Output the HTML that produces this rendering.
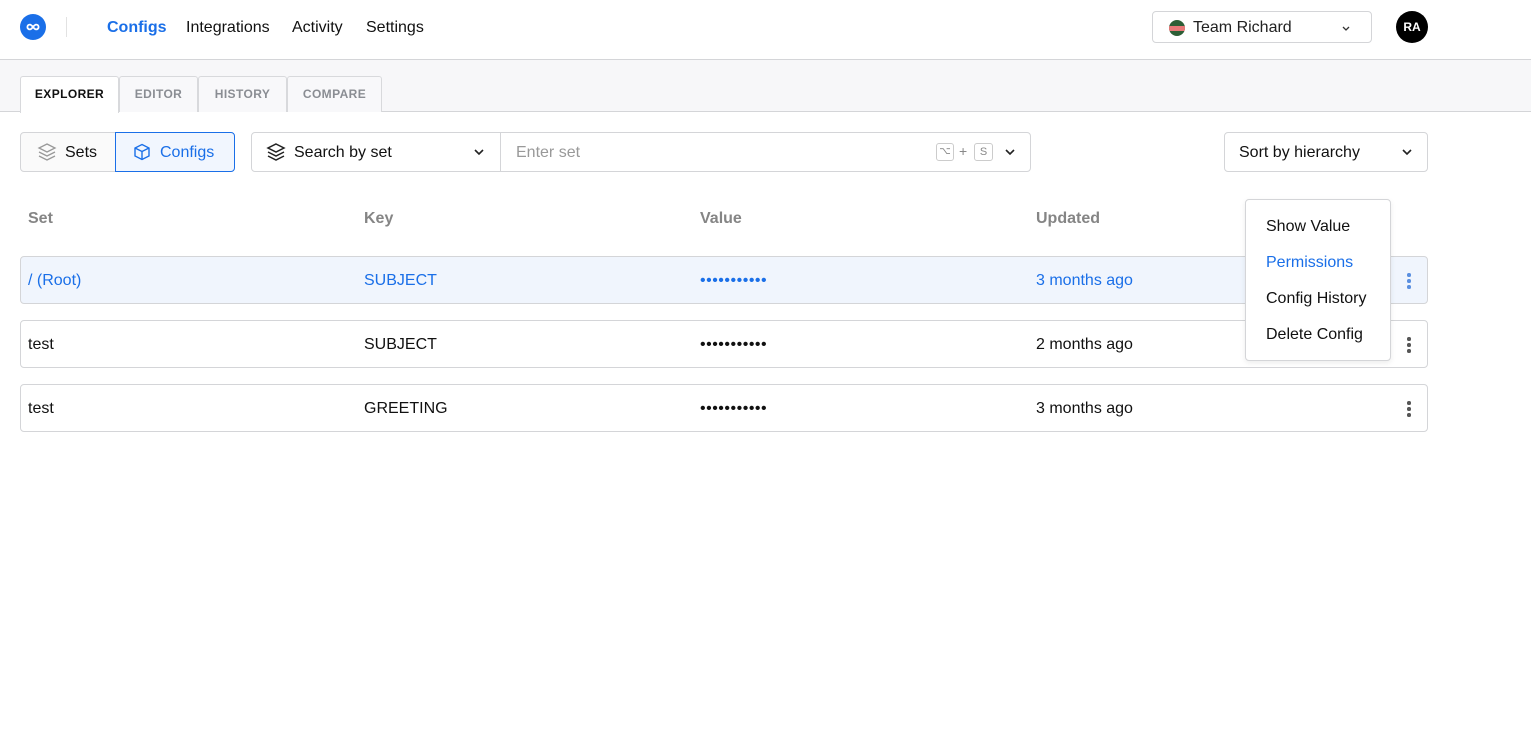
<!DOCTYPE html>
<html><head><style>
*{box-sizing:border-box;margin:0;padding:0}
body{width:1531px;height:755px;background:#fff;font-family:"Liberation Sans",sans-serif;color:#111;position:relative;overflow:hidden}
.a{position:absolute}
.blue{color:#1a6fe8}
.nav{font-size:16px;top:19px}
.tab{top:76px;height:36px;border:1px solid #d8d9dc;border-bottom:none;background:#f8f8fa;font-size:12px;font-weight:bold;letter-spacing:.4px;color:#8a8d93;text-align:center;line-height:35px;border-radius:3px 3px 0 0}
.box{border:1px solid #d4d5d8;border-radius:4px;background:#fff}
.row{left:20px;width:1408px;height:48px;border:1px solid #d4d5d8;border-radius:4px;font-size:16px}
.row span{position:absolute;top:15px}
.hd{top:210px;font-size:16px;font-weight:bold;color:#858585}
.dots{position:absolute;left:1386px;top:16px;width:4px}
.dots i{display:block;width:3.5px;height:3.5px;border-radius:50%;background:#555;margin-bottom:2.5px}
</style></head><body>
<div class="a" style="left:20px;top:14px;width:26px;height:26px;border-radius:50%;background:#1a6fe8"><svg width="26" height="26" viewBox="0 0 26 26"><path d="M13 13c-1.2-1.6-2-2.4-3.2-2.4a2.4 2.4 0 0 0 0 4.8c1.2 0 2-.8 3.2-2.4zm0 0c1.2 1.6 2 2.4 3.2 2.4a2.4 2.4 0 0 0 0-4.8c-1.2 0-2 .8-3.2 2.4" fill="none" stroke="#fff" stroke-width="1.8"/></svg></div>
<div class="a" style="left:66px;top:17px;width:1px;height:20px;background:#e2e2e2"></div>
<div class="a nav blue" style="left:107px;font-weight:bold">Configs</div>
<div class="a nav" style="left:186px">Integrations</div>
<div class="a nav" style="left:292px">Activity</div>
<div class="a nav" style="left:366px">Settings</div>
<div class="a box" style="left:1152px;top:11px;width:220px;height:32px;font-size:16px">
<div class="a" style="left:16px;top:8px;width:16px;height:16px;border-radius:50%;background:#2d5e36;overflow:hidden"><div class="a" style="left:0;top:6px;width:16px;height:5px;background:#e87878"></div></div>
<span class="a" style="left:40px;top:7px;color:#222">Team Richard</span>
<svg class="a" style="left:188px;top:11px" width="10" height="10" viewBox="0 0 10 10"><path d="M2 4l3 3 3-3" fill="none" stroke="#333" stroke-width="1.3"/></svg></div>
<div class="a" style="left:1396px;top:11px;width:32px;height:32px;border-radius:50%;background:#000;color:#fff;font-size:12px;font-weight:bold;text-align:center;line-height:32px">RA</div>
<div class="a" style="left:0;top:59px;width:1531px;height:53px;background:#f7f7f9;border-top:1px solid #d4d5d8;border-bottom:1px solid #d4d5d8"></div>
<div class="a tab" style="left:20px;width:99px;background:#fff;color:#111;height:37px">EXPLORER</div>
<div class="a tab" style="left:119px;width:79px">EDITOR</div>
<div class="a tab" style="left:198px;width:89px">HISTORY</div>
<div class="a tab" style="left:287px;width:95px">COMPARE</div>
<div class="a box" style="left:20px;top:132px;width:96px;height:40px;background:#fafafa;border-radius:4px 0 0 4px"></div>
<svg class="a" style="left:37px;top:142px" width="20" height="20" viewBox="0 0 20 20" fill="none" stroke="#999" stroke-width="1.3"><path d="M10 2l8 4-8 4-8-4z"/><path d="M2 10l8 4 8-4"/><path d="M2 14l8 4 8-4"/></svg>
<div class="a" style="left:65px;top:144px;font-size:16px">Sets</div>
<div class="a" style="left:115px;top:132px;width:120px;height:40px;border:1px solid #1a6fe8;background:#f1f6fe;border-radius:0 4px 4px 0"></div>
<svg class="a" style="left:133px;top:143px" width="18" height="18" viewBox="0 0 18 18" fill="none" stroke="#1a6fe8" stroke-width="1.4"><path d="M9 1.5l7 3.5v8l-7 3.5-7-3.5v-8z"/><path d="M2 5l7 3.5 7-3.5M9 8.5V16.5"/></svg>
<div class="a blue" style="left:160px;top:144px;font-size:16px">Configs</div>
<div class="a box" style="left:251px;top:132px;width:250px;height:40px;border-radius:4px 0 0 4px"></div>
<svg class="a" style="left:266px;top:142px" width="20" height="20" viewBox="0 0 20 20" fill="none" stroke="#222" stroke-width="1.5"><path d="M10 2l8 4-8 4-8-4z"/><path d="M2 10l8 4 8-4"/><path d="M2 14l8 4 8-4"/></svg>
<div class="a" style="left:294px;top:144px;font-size:16px">Search by set</div>
<svg class="a" style="left:473px;top:146px" width="12" height="12" viewBox="0 0 12 12"><path d="M2 4l4 4 4-4" fill="none" stroke="#222" stroke-width="1.6"/></svg>
<div class="a box" style="left:500px;top:132px;width:531px;height:40px;border-radius:0 4px 4px 0"></div>
<div class="a" style="left:516px;top:144px;font-size:16px;color:#999">Enter set</div>
<div class="a" style="left:936px;top:143px;width:18px;height:18px;border:1px solid #ccc;border-radius:3px;font-size:10px;color:#888;text-align:center;line-height:16px">⌥</div>
<div class="a" style="left:959px;top:143px;font-size:14px;color:#888">+</div>
<div class="a" style="left:974px;top:143px;width:19px;height:18px;border:1px solid #ccc;border-radius:3px;font-size:11px;color:#888;text-align:center;line-height:16px">S</div>
<svg class="a" style="left:1004px;top:146px" width="12" height="12" viewBox="0 0 12 12"><path d="M2 4l4 4 4-4" fill="none" stroke="#222" stroke-width="1.6"/></svg>
<div class="a box" style="left:1224px;top:132px;width:204px;height:40px"></div>
<div class="a" style="left:1239px;top:144px;font-size:16px">Sort by hierarchy</div>
<svg class="a" style="left:1401px;top:146px" width="12" height="12" viewBox="0 0 12 12"><path d="M2 4l4 4 4-4" fill="none" stroke="#222" stroke-width="1.6"/></svg>
<div class="a hd" style="left:28px">Set</div>
<div class="a hd" style="left:364px">Key</div>
<div class="a hd" style="left:700px">Value</div>
<div class="a hd" style="left:1036px">Updated</div>
<div class="a row blue" style="top:256px;background:#f0f5fd"><span style="left:7px">/ (Root)</span><span style="left:343px">SUBJECT</span><span style="left:679px;letter-spacing:.5px">•••••••••••</span><span style="left:1015px">3 months ago</span><div class="dots"><i style="background:#5a8fe0"></i><i style="background:#5a8fe0"></i><i style="background:#5a8fe0"></i></div></div>
<div class="a row" style="top:320px"><span style="left:7px">test</span><span style="left:343px">SUBJECT</span><span style="left:679px;letter-spacing:.5px">•••••••••••</span><span style="left:1015px">2 months ago</span><div class="dots"><i></i><i></i><i></i></div></div>
<div class="a row" style="top:384px"><span style="left:7px">test</span><span style="left:343px">GREETING</span><span style="left:679px;letter-spacing:.5px">•••••••••••</span><span style="left:1015px">3 months ago</span><div class="dots"><i></i><i></i><i></i></div></div>
<div class="a box" style="left:1245px;top:199px;width:146px;height:162px;box-shadow:0 2px 6px rgba(0,0,0,.08);font-size:16px">
<div class="a" style="left:20px;top:18px">Show Value</div>
<div class="a blue" style="left:20px;top:54px">Permissions</div>
<div class="a" style="left:20px;top:90px">Config History</div>
<div class="a" style="left:20px;top:126px">Delete Config</div>
</div>
</body></html>
